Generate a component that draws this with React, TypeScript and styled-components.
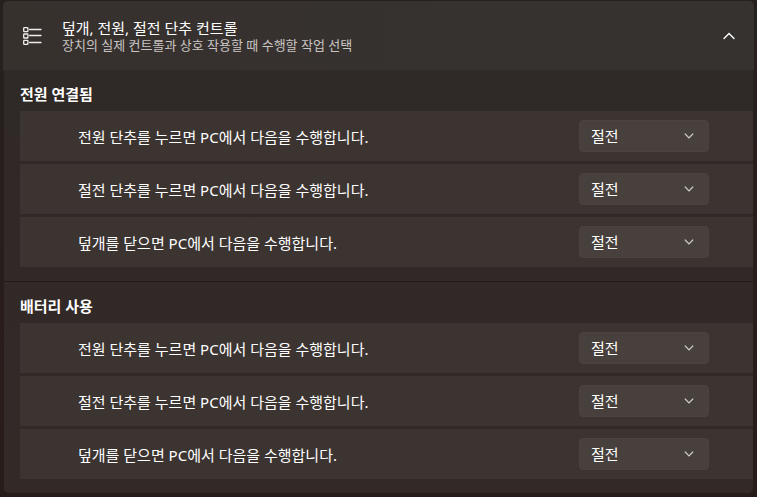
import React, { useId, useState } from "react";
import styled, { createGlobalStyle } from "styled-components";

const GlobalStyle = createGlobalStyle`
  * { box-sizing: border-box; }
  body {
    margin: 0;
    background: linear-gradient(180deg, #26211f 0, #281e1c 200px, #281c1a 100%);
    color: #ffffff;
    font-family: "Noto Sans", "Noto Sans CJK KR", sans-serif;
    font-size: 15px;
    line-height: 20px;
  }
`;

const Page = styled.main`
  padding: 1px 3px 4px;
`;

const Header = styled.button`
  display: flex;
  align-items: center;
  width: 100%;
  height: 69px;
  padding: 0 19px 0 20px;
  border: 0;
  border-radius: 5px 5px 0 0;
  background: linear-gradient(90deg, #37312e, #35322f);
  color: inherit;
  font: inherit;
  text-align: left;
`;

const HeaderText = styled.span`
  display: flex;
  flex: 1;
  flex-direction: column;
  margin-left: 20px;
`;

const Title = styled.span`
  line-height: 18px;
`;

const Description = styled.span`
  color: #c9c5c3;
  font-size: 13px;
  line-height: 16px;
`;

const Body = styled.div`
  margin: 0 1px;
  border-radius: 0 0 5px 5px;
  background: linear-gradient(180deg, #2f2a27 0, #312927 100px, #332a28 100%);
`;

const Section = styled.section`
  padding: 14px 0 14px 16px;

  & + & {
    border-top: 1px solid #241b19;
  }
`;

const SectionTitle = styled.h2`
  margin: 0 0 7px;
  font-size: 15px;
  font-weight: 700;
  line-height: 20px;
`;

const Rows = styled.div`
  display: flex;
  flex-direction: column;
  gap: 3px;
`;

const Row = styled.div`
  display: flex;
  align-items: center;
  justify-content: space-between;
  height: 50px;
  padding: 0 44px 0 58px;
  background: #3c3431;
`;

const RowLabel = styled.label`
  padding-top: 2px;
`;

const SelectBox = styled.div`
  display: grid;
  grid-template-columns: 1fr 25px;
  align-items: center;
  width: 130px;
`;

const Select = styled.select`
  grid-area: 1 / 1 / 2 / 3;
  width: 100%;
  height: 32px;
  padding: 0 32px 0 11px;
  border: 1px solid #4b4340;
  border-radius: 4px;
  appearance: none;
  background: #47403d;
  color: inherit;
  font: inherit;
`;

const ChevronSlot = styled.span`
  display: flex;
  grid-area: 1 / 2;
  pointer-events: none;
`;

function ListIcon() {
  return (
    <svg width="19" height="20" viewBox="0 0 19 20" fill="none" stroke="#f0edeb" strokeWidth="1.3" aria-hidden="true">
      <rect x="0.7" y="1.7" width="4.2" height="4" rx="0.6" />
      <rect x="0.7" y="8" width="4.2" height="4" rx="0.6" />
      <rect x="0.7" y="14.3" width="4.2" height="4" rx="0.6" />
      <path d="M6.6 3.5H18M6.6 9.5H18M6.6 16.5H18" strokeLinecap="round" />
    </svg>
  );
}

function ChevronUp() {
  return (
    <svg width="12" height="8" viewBox="0 0 12 8" fill="none" stroke="#ffffff" strokeWidth="1.4" strokeLinecap="round" aria-hidden="true">
      <path d="M1 6.5 6 1.5l5 5" />
    </svg>
  );
}

function ChevronDown() {
  return (
    <svg width="10" height="6" viewBox="0 0 10 6" fill="none" stroke="#d0cbc9" strokeWidth="1.2" strokeLinecap="round" aria-hidden="true">
      <path d="M1.2 1 5 4.8 8.8 1" />
    </svg>
  );
}

const ACTIONS = ["절전", "최대 절전 모드", "시스템 종료", "아무 것도 안 함"];

const SETTINGS = [
  "전원 단추를 누르면 PC에서 다음을 수행합니다.",
  "절전 단추를 누르면 PC에서 다음을 수행합니다.",
  "덮개를 닫으면 PC에서 다음을 수행합니다.",
];

function SettingRow({ label }: { label: string }) {
  const id = useId();
  return (
    <Row>
      <RowLabel htmlFor={id}>{label}</RowLabel>
      <SelectBox>
        <Select id={id} defaultValue={ACTIONS[0]}>
          {ACTIONS.map((action) => (
            <option key={action}>{action}</option>
          ))}
        </Select>
        <ChevronSlot>
          <ChevronDown />
        </ChevronSlot>
      </SelectBox>
    </Row>
  );
}

function PowerSection({ title }: { title: string }) {
  return (
    <Section>
      <SectionTitle>{title}</SectionTitle>
      <Rows>
        {SETTINGS.map((label) => (
          <SettingRow key={label} label={label} />
        ))}
      </Rows>
    </Section>
  );
}

export default function App() {
  const [open, setOpen] = useState(true);
  return (
    <>
      <GlobalStyle />
      <Page lang="ko">
        <Header type="button" aria-expanded={open} onClick={() => setOpen(!open)}>
          <ListIcon />
          <HeaderText>
            <Title>덮개, 전원, 절전 단추 컨트롤</Title>
            <Description>장치의 실제 컨트롤과 상호 작용할 때 수행할 작업 선택</Description>
          </HeaderText>
          <ChevronUp />
        </Header>
        {open && (
          <Body>
            <PowerSection title="전원 연결됨" />
            <PowerSection title="배터리 사용" />
          </Body>
        )}
      </Page>
    </>
  );
}
